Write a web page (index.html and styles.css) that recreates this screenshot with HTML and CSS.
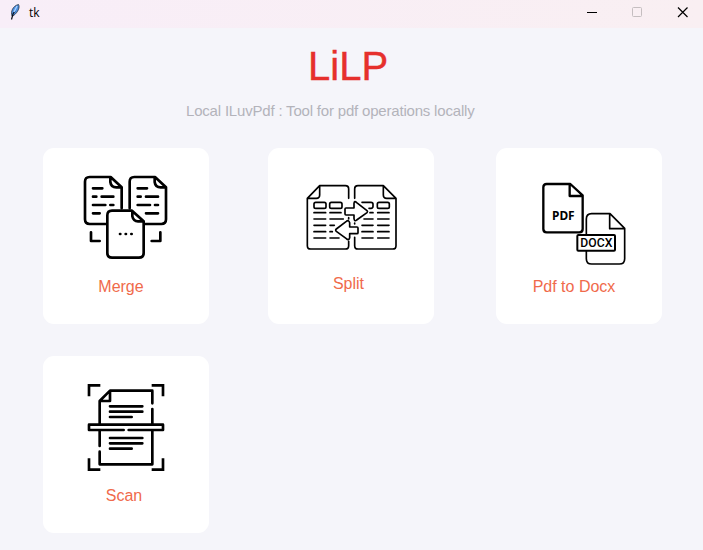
FILE: index.html
```html
<!DOCTYPE html>
<html lang="en">
<head>
<meta charset="utf-8">
<title>tk</title>
<link rel="stylesheet" href="styles.css">
</head>
<body>
<header class="titlebar">
  <svg class="feather" viewBox="0 0 12 18">
    <path d="M3 13C1.500 9 3.500 3 9.500 1.500C11 4 9.500 9 4 13Z" fill="#4b8fe0" stroke="#27303e" stroke-width=".8"/>
    <path d="M2.500 16.500L4 11L6 8" fill="none" stroke="#0c1018" stroke-width="1.200"/>
    <path d="M5 9L8 3" stroke="#a9d2ff" stroke-width="1.400"/>
  </svg>
  <span class="window-name">tk</span>
  <svg class="controls" viewBox="0 0 103 12" fill="none">
    <path d="M0 6.500H10" stroke="#000"/>
    <rect x="45.500" y="1.500" width="9" height="9" rx="1" stroke="#c5bec0"/>
    <path d="M91 1.500L100.500 11M100.500 1.500L91 11" stroke="#000" stroke-width="1.200"/>
  </svg>
</header>
<main>
  <h1>LiLP</h1>
  <p class="tagline">Local ILuvPdf : Tool for pdf operations locally</p>
  <section class="tools">
    <article class="card merge">
      <svg class="icon" viewBox="-105 -66 498 360" stroke-width="8">
        <path d="M83 162H35Q21 162 21 148V35Q21 21 35 21H98L131 52V115M97 22V36Q99 52 115 52H130"/>
        <path d="M155 115V35Q155 21 169 21H231L264 52V148Q264 162 250 162H202M230 22V36Q232 52 248 52H263"/>
        <path d="M162 122H102Q88 122 88 136V249Q88 263 102 263H183Q197 263 197 249V154ZM163 123V139Q166 154 180 154H196"/>
        <path d="M45 55H73M45 80H55M71 80H106M45 105H82M97 105H106M45 130H65M179 55H207M179 80H188M204 80H240M179 105H216M231 105H240M204 130H240"/>
        <path d="M39 187V213H65M247 187V213H221"/>
        <path d="M126 192H127M143 192H144M160 192H161"/>
      </svg>
      <span class="label">Merge</span>
    </article>
    <article class="card split">
      <svg class="icon" viewBox="-96 -90 498 360" stroke-width="5">
        <path d="M146 61V33Q146 23 136 23H59L22 61V203Q22 213 32 213H136Q146 213 146 203V190M59 24V51Q59 61 49 61H23"/>
        <path d="M164 61V33Q164 23 174 23H250L288 61V203Q288 213 278 213H174Q164 213 164 203V178M250 24V51Q250 61 260 61H287M146 119V123M164 135V138"/>
        <rect x="42" y="73" width="36" height="18" rx="5"/>
        <rect x="89" y="73" width="37" height="18" rx="5"/>
        <path d="M186 73H213Q219 73 219 79V85Q219 91 213 91H207"/>
        <rect x="232" y="73" width="36" height="18" rx="5"/>
        <path d="M138 90H162V76Q163 67 170 74L201 98Q204 101 201 104L170 126Q164 132 162 122V111H138Q135 111 135 108V93Q135 90 138 90Z"/>
        <path d="M171 147H149V134Q146 124 139 130L109 153Q105 156 109 160L139 182Q146 189 149 179V167H171Q174 167 174 164V150Q174 147 171 147Z"/>
        <path d="M42 104H77M90 104H123M42 123H77M90 123H130M42 142H77M90 142H103M42 161H77M90 161H97M42 180H77M90 180H117M210 104H219M233 104H267M192 123H219M233 123H267M186 142H219M233 142H267M186 161H219M233 161H267M186 180H219M233 180H267"/>
      </svg>
      <span class="label">Split</span>
    </article>
    <article class="card convert">
      <svg class="icon" viewBox="-120 -87 498 360">
        <path d="M140 55L103 21H32Q22 21 22 31V156Q22 166 32 166H130Q140 166 140 156V55ZM101 22V57H139" stroke-width="7"/>
        <path d="M151 173V126Q151 110 167 110H222L266 154V245Q266 261 250 261H167Q151 261 151 245V222M221 111V155H265" stroke-width="5"/>
        <rect x="124" y="174" width="113" height="47" rx="3" stroke-width="6"/>
        <text class="pdf-mark" x="48" y="129" textLength="68" lengthAdjust="spacingAndGlyphs">PDF</text>
        <text class="docx-mark" x="133" y="211" textLength="96" lengthAdjust="spacingAndGlyphs">DOCX</text>
      </svg>
      <span class="label">Pdf to Docx</span>
    </article>
    <article class="card scan">
      <svg class="icon" viewBox="-117 -66 498 360" stroke-width="8">
        <g class="square">
          <path d="M21 55V22H55M209 22H243V55M21 241V275H55M209 275H243V241"/>
        </g>
        <path d="M53 139V69L84 38H211V76M84 40V69H54M211 93V139M53 158V204M53 221V259H211V158"/>
        <path d="M125 156H21V140H243V156H140"/>
        <path d="M84 85H181M84 101H181M84 117H149M84 180H181M84 196H181M84 212H149"/>
      </svg>
      <span class="label">Scan</span>
    </article>
  </section>
</main>
</body>
</html>
```

FILE: styles.css
```css
* {
  box-sizing: border-box;
}

body {
  margin: 0;
  height: 550px;
  overflow: hidden;
  background: #f5f5fa;
  font-family: "Liberation Sans", Arial, sans-serif;
}

.titlebar {
  display: flex;
  align-items: flex-start;
  height: 28px;
  padding: 0 13px 0 9px;
  background: linear-gradient(90deg, #f8eef8, #f9eff2);
}

.feather {
  width: 12px;
  height: 18px;
  margin-top: 3px;
}

.window-name {
  margin: 5px 0 0 8px;
  font: 12px/16px "Open Sans", sans-serif;
  color: #000;
}

.controls {
  width: 103px;
  height: 12px;
  margin: 6px 0 0 auto;
}

h1 {
  margin: 15px 0 0 308px;
  font-size: 40px;
  line-height: 46px;
  font-weight: 400;
  color: #e6302c;
  -webkit-text-stroke: 0.4px #e6302c;
}

.tagline {
  margin: 13px 0 0 186px;
  font-size: 15px;
  line-height: 18px;
  letter-spacing: -0.19px;
  color: #b3b3ba;
  white-space: nowrap;
}

.tools {
  display: grid;
  grid-template-columns: 166px 166px 166px;
  grid-template-rows: 176px 177px;
  column-gap: 59px;
  row-gap: 32px;
  margin: 28px 0 0 43px;
}

.card {
  display: flex;
  flex-direction: column;
  align-items: center;
  border-radius: 11px;
  background: #fff;
}

.convert {
  margin: 0 -3px 0 3px;
}

.icon {
  flex: none;
  width: 166px;
  height: 120px;
  fill: none;
  stroke: #000;
  stroke-linecap: round;
  stroke-linejoin: round;
}

.square {
  stroke-linecap: butt;
  stroke-linejoin: miter;
}

.label {
  margin: 10px 10px 0 0;
  font-size: 16px;
  line-height: 18px;
  color: #f06a4b;
}

.split .label {
  margin: 7px 5px 0 0;
}

.scan .label {
  margin: 11px 4px 0 0;
}

.pdf-mark,
.docx-mark {
  fill: #000;
  stroke: none;
}

.pdf-mark {
  font: 700 38px "Noto Sans", sans-serif;
}

.docx-mark {
  font: 500 40px Roboto, sans-serif;
}
```
